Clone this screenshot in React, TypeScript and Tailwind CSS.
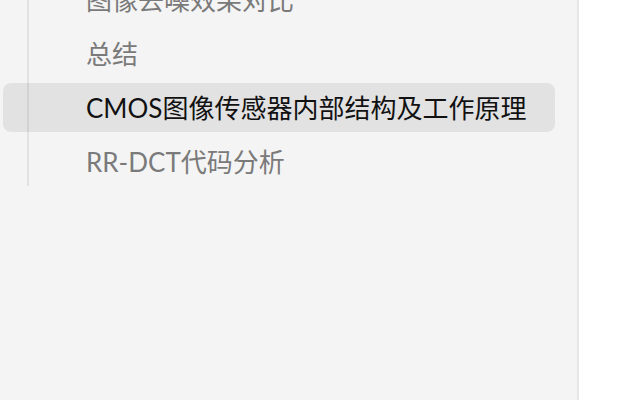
const items = [
  { title: "图像去噪效果对比", active: false },
  { title: "总结", active: false },
  { title: "CMOS图像传感器内部结构及工作原理", active: true },
  { title: "RR-DCT代码分析", active: false },
];

export default function App() {
  return (
    <div className="flex h-[400px] w-[640px] overflow-hidden bg-white">
      <aside className="h-full w-[579px] shrink-0 overflow-hidden border-r-2 border-[#e6e6e6] bg-[#f4f4f4]">
        <ul className="ml-[27px] mt-[-25px] flex flex-col gap-[5px] border-l-2 border-[#e2e2e2]">
          {items.map((item) => (
            <li
              key={item.title}
              className={
                "ml-[-26px] mr-[22px] flex h-[49px] items-center rounded-lg pl-[83px] text-[26px] leading-none whitespace-nowrap " +
                (item.active ? "bg-black/[0.07] text-[#111111]" : "text-[#7a7a7a]")
              }
              style={{ fontFamily: "Lato, 'Noto Sans CJK SC', sans-serif" }}
            >
              {item.title}
            </li>
          ))}
        </ul>
      </aside>
      <main className="flex-1 bg-white" />
    </div>
  );
}
